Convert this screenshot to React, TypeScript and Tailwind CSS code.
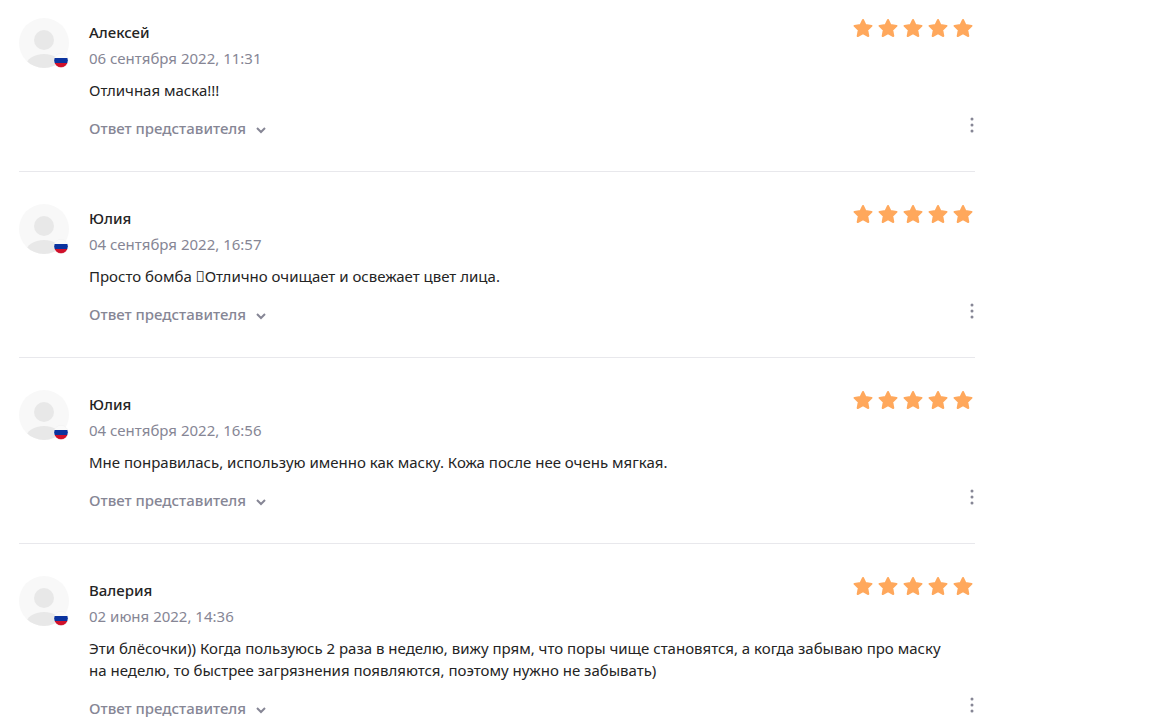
type Review = { id: number; name: string; date: string; text: string };

const reviews: Review[] = [
  { id: 1, name: "Алексей", date: "06 сентября 2022, 11:31", text: "Отличная маска!!!" },
  { id: 2, name: "Юлия", date: "04 сентября 2022, 16:57", text: "Просто бомба \uE000Отлично очищает и освежает цвет лица." },
  { id: 3, name: "Юлия", date: "04 сентября 2022, 16:56", text: "Мне понравилась, использую именно как маску. Кожа после нее очень мягкая." },
  {
    id: 4,
    name: "Валерия",
    date: "02 июня 2022, 14:36",
    text: "Эти блёсочки)) Когда пользуюсь 2 раза в неделю, вижу прям, что поры чище становятся, а когда забываю про маску на неделю, то быстрее загрязнения появляются, поэтому нужно не забывать)",
  },
];

function Avatar() {
  return (
    <svg className="size-[50px] shrink-0" viewBox="0 0 50 50" aria-hidden="true">
      <defs>
        <clipPath id="face"><circle cx="25" cy="25" r="25" /></clipPath>
        <clipPath id="flag"><circle cx="42" cy="42.5" r="7" /></clipPath>
      </defs>
      <circle cx="25" cy="25" r="25" fill="#f8f8f8" />
      <g clipPath="url(#face)" fill="#e8e8e8">
        <circle cx="25" cy="22" r="10" />
        <ellipse cx="25" cy="48" rx="18" ry="12" />
      </g>
      <g clipPath="url(#flag)">
        <path fill="#fafafa" d="M35 35h14v5H35z" />
        <path fill="#0b339f" d="M35 40h14v5H35z" />
        <path fill="#d0102a" d="M35 45h14v5H35z" />
      </g>
      <circle cx="42" cy="42.5" r="7.2" fill="none" stroke="#f1f1f1" strokeWidth="0.5" />
    </svg>
  );
}

function Stars() {
  return (
    <div className="flex gap-[5px] pr-0.5" role="img" aria-label="5 из 5">
      {[1, 2, 3, 4, 5].map((n) => (
        <svg key={n} className="size-5" viewBox="0 0 20 20" fill="#ffa85c" stroke="#ffa85c" strokeWidth="2" strokeLinejoin="round">
          <path d="M10 2l2.5 5.1 6 .8-4.3 4.1 1.1 6-5.3-2.9L4.7 18l1.1-6-4.3-4.1 6-.8z" />
        </svg>
      ))}
    </div>
  );
}

function ReviewItem({ review }: { review: Review }) {
  return (
    <article className="mb-8 flex border-b border-[#e8e8ec] pb-[29px]">
      <Avatar />
      <div className="ml-5 min-w-0 flex-1">
        <header className="flex justify-between">
          <div className="pt-px">
            <h3 className="text-[15px] leading-[26px] font-medium text-[#242424]">{review.name}</h3>
            <time className="block text-[15px] leading-[26px] text-[#868695]">{review.date}</time>
          </div>
          <Stars />
        </header>
        <p className="mt-2 pr-5 text-[15px] leading-[22px] text-[#242424]">{review.text}</p>
        <footer className="mt-[13px] flex h-7 items-start justify-between">
          <button type="button" className="flex h-7 items-center gap-2.5 text-[15px] font-medium text-[#868695]">
            Ответ представителя
            <svg className="mt-1 h-2 w-2.5" viewBox="0 0 10 8" fill="none" stroke="currentColor" strokeWidth="2">
              <path d="M1 2l4 4 4-4" />
            </svg>
          </button>
          <button type="button" aria-label="Меню" className="pt-[3px] pr-px">
            <svg className="h-4 w-1" viewBox="0 0 4 16" fill="#868695">
              <circle cx="2" cy="2" r="1.5" />
              <circle cx="2" cy="8" r="1.5" />
              <circle cx="2" cy="14" r="1.5" />
            </svg>
          </button>
        </footer>
      </div>
    </article>
  );
}

export default function App() {
  return (
    <main className="h-screen overflow-hidden bg-white pt-[18px] pr-[181px] pl-[19px] font-['Noto_Sans',sans-serif]">
      {reviews.map((r) => (
        <ReviewItem key={r.id} review={r} />
      ))}
    </main>
  );
}
